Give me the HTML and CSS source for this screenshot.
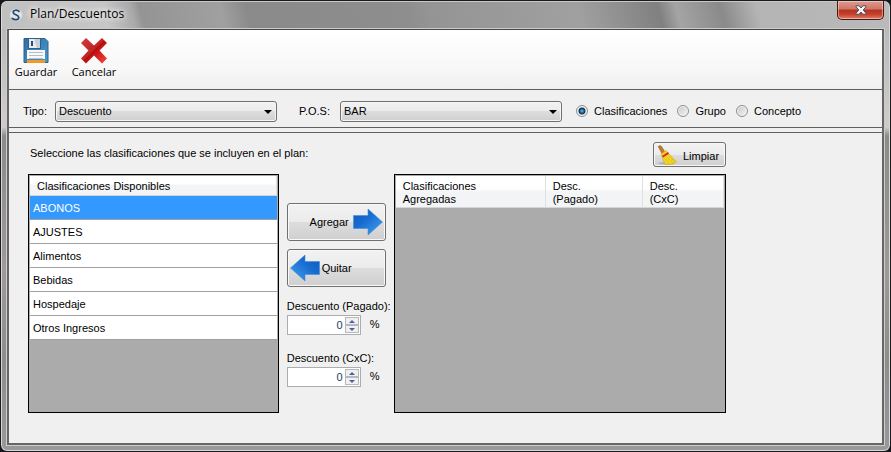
FILE: index.html
```html
<!DOCTYPE html>
<html lang="es">
<head>
    <meta charset="UTF-8">
    <meta name="viewport" content="width=device-width, initial-scale=1.0">
    <title>Plan/Descuentos</title>
    <link rel="stylesheet" href="styles.css">
</head>
<body>
    <div class="window">
        <header class="titlebar">
            <svg class="logo" viewBox="0 0 14 14" width="14" height="14" aria-hidden="true">
                <circle cx="7" cy="7" r="6.5" fill="#dfe4e8" stroke="#b9c0c6" stroke-width=".6"/>
                <path d="M10 3.400C8.200 1.400 4 1.900 4.200 4.500c.1 2.500 5.600 2.100 5.600 4.900 0 2.600-4.400 3.100-6.600 1" fill="none" stroke="#27486b" stroke-width="1.7" stroke-linecap="round"/>
            </svg>
            <h1 class="title">Plan/Descuentos</h1>
            <button class="close" type="button" aria-label="Cerrar">
                <svg viewBox="0 0 12 10" width="12" height="10">
                    <path d="M1 .8h3.200L6 3 7.800.8H11v1L8.200 5 11 8.200v1H7.800L6 7 4.200 9.200H1v-1L3.800 5 1 1.800z" fill="#f6f6f6" stroke="#4b4f62" stroke-width="1"/>
                </svg>
            </button>
        </header>
        <main class="client">
            <div class="toolbar">
                <button class="tool" type="button">
                    <svg viewBox="0 0 26 27" width="26" height="27">
                        <defs>
                            <linearGradient id="disk" x1="0" y1="0" x2="1" y2="1">
                                <stop offset="0" stop-color="#2f6da0"/>
                                <stop offset="1" stop-color="#4d9ad0"/>
                            </linearGradient>
                        </defs>
                        <path d="M1 1.500h21l3 3v21H1z" fill="url(#disk)" stroke="#2b6090"/>
                        <path d="M5 2h13v10H5z" fill="#2c618f"/>
                        <path d="M6 2h11v9H6z" fill="#e8eaec"/>
                        <path d="M8 4h2v5H8z" fill="#2a4f78"/>
                        <path d="M11 2h6v9h-3z" fill="#c9ced3"/>
                        <path d="M4 13h18v9H4z" fill="#f8f8f8"/>
                        <path d="M6 15.500h14M6 18.500h14M6 21.500h14" stroke="#b9bdc2"/>
                        <path d="M4 23h18v3H4z" fill="#f09a2c"/>
                    </svg>
                    <span>Guardar</span>
                </button>
                <button class="tool" type="button">
                    <svg viewBox="0 0 26 27" width="26" height="27">
                        <defs>
                            <linearGradient id="cross" x1="0" y1="0" x2="1" y2="1">
                                <stop offset="0" stop-color="#d23c3c"/>
                                <stop offset=".48" stop-color="#c02424"/>
                                <stop offset=".5" stop-color="#b90a0a"/>
                                <stop offset="1" stop-color="#ff4a44"/>
                            </linearGradient>
                        </defs>
                        <path d="M5 1l8 7.500L21 1l5 5-7.500 7.500L26 21.500l-5 5-8-8-8 8-5-5 7.500-8L0 6z" fill="url(#cross)"/>
                    </svg>
                    <span>Cancelar</span>
                </button>
            </div>
            <div class="filters">
                <label class="filter-label" for="tipo">Tipo:</label>
                <div class="combo">
                    <select id="tipo">
                        <option>Descuento</option>
                    </select>
                </div>
                <label class="filter-label pos" for="pos">P.O.S:</label>
                <div class="combo">
                    <select id="pos">
                        <option>BAR</option>
                    </select>
                </div>
                <div class="radios">
                    <label class="radio"><input type="radio" name="nivel" checked>Clasificaciones</label>
                    <label class="radio"><input type="radio" name="nivel">Grupo</label>
                    <label class="radio"><input type="radio" name="nivel">Concepto</label>
                </div>
            </div>
            <div class="content">
                <div class="heading">
                    <p>Seleccione las clasificaciones que se incluyen en el plan:</p>
                    <button class="btn clear" type="button">
                        <svg viewBox="0 0 20 20" width="20" height="20">
                            <path d="M1 18q8-3 17 0l-2 1.500H3z" fill="#b5b5b5"/>
                            <path d="M1.200 1.500Q3-.5 4.600 1.500L8 7 5 8.800z" fill="#bd7a2c" stroke="#96591c" stroke-width=".5"/>
                            <path d="M4 9l5-3.500 3.500 4 7 7.500-4 2-7.500.5L6 14z" fill="#f2d422" stroke="#d0a814" stroke-width=".6"/>
                            <path d="M8 13l4 6M10 12l6 6M12 11l6 6" stroke="#dcb41a" stroke-width=".6"/>
                            <path d="M5 11l6-4 1 1.800L6 12.500z" fill="#d42a20"/>
                        </svg>
                        <span>Limpiar</span>
                    </button>
                </div>
                <div class="columns">
                    <div class="grid-box">
                        <table class="grid available">
                            <thead>
                                <tr><th scope="col">Clasificaciones Disponibles</th></tr>
                            </thead>
                            <tbody>
                                <tr class="selected"><td>ABONOS</td></tr>
                                <tr><td>AJUSTES</td></tr>
                                <tr><td>Alimentos</td></tr>
                                <tr><td>Bebidas</td></tr>
                                <tr><td>Hospedaje</td></tr>
                                <tr><td>Otros Ingresos</td></tr>
                            </tbody>
                        </table>
                    </div>
                    <div class="actions">
                        <button class="btn move add" type="button">
                            <span>Agregar</span>
                            <svg viewBox="0 0 30 28" width="30" height="28">
                                <defs>
                                    <linearGradient id="arrow" x1="0" y1="0" x2="1" y2="1">
                                        <stop offset="0" stop-color="#1458b8"/>
                                        <stop offset=".4" stop-color="#176bd0"/>
                                        <stop offset="1" stop-color="#45a4ee"/>
                                    </linearGradient>
                                </defs>
                                <path d="M.5 7.500H15V1l14.500 13L15 27v-6.500H.5z" fill="url(#arrow)" stroke="#3f8edc" stroke-width=".6"/>
                            </svg>
                        </button>
                        <button class="btn move" type="button">
                            <svg viewBox="0 0 30 28" width="30" height="28">
                                <defs>
                                    <linearGradient id="arrow-back" x1="1" y1="0" x2="0" y2="1">
                                        <stop offset="0" stop-color="#1458b8"/>
                                        <stop offset=".4" stop-color="#176bd0"/>
                                        <stop offset="1" stop-color="#45a4ee"/>
                                    </linearGradient>
                                </defs>
                                <path d="M29.500 7.500H15V1L.5 14 15 27v-6.500h14.500z" fill="url(#arrow-back)" stroke="#3f8edc" stroke-width=".6"/>
                            </svg>
                            <span>Quitar</span>
                        </button>
                        <div class="field">
                            <label for="pagado">Descuento (Pagado):</label>
                            <div class="field-row">
                                <div class="spin">
                                    <input id="pagado" type="number" value="0" min="0" max="100">
                                    <div class="spin-buttons">
                                        <button type="button" aria-label="Aumentar"><svg viewBox="0 0 6 3" width="6" height="3"><path d="M0 3l3-3 3 3z"/></svg></button>
                                        <button type="button" aria-label="Disminuir"><svg viewBox="0 0 6 3" width="6" height="3"><path d="M0 0h6L3 3z"/></svg></button>
                                    </div>
                                </div>
                                <span>%</span>
                            </div>
                        </div>
                        <div class="field">
                            <label for="cxc">Descuento (CxC):</label>
                            <div class="field-row">
                                <div class="spin">
                                    <input id="cxc" type="number" value="0" min="0" max="100">
                                    <div class="spin-buttons">
                                        <button type="button" aria-label="Aumentar"><svg viewBox="0 0 6 3" width="6" height="3"><path d="M0 3l3-3 3 3z"/></svg></button>
                                        <button type="button" aria-label="Disminuir"><svg viewBox="0 0 6 3" width="6" height="3"><path d="M0 0h6L3 3z"/></svg></button>
                                    </div>
                                </div>
                                <span>%</span>
                            </div>
                        </div>
                    </div>
                    <div class="grid-box">
                        <table class="grid added">
                            <thead>
                                <tr>
                                    <th class="col-name" scope="col">Clasificaciones<br>Agregadas</th>
                                    <th class="col-paid" scope="col">Desc.<br>(Pagado)</th>
                                    <th scope="col">Desc.<br>(CxC)</th>
                                </tr>
                            </thead>
                        </table>
                    </div>
                </div>
            </div>
        </main>
    </div>
</body>
</html>
```
FILE: styles.css
```css
*{
    box-sizing: border-box;
}
body{
    margin: 0;
    background-color: #15151b;
    font-family: "Liberation Sans", Arial, sans-serif;
    font-size: 11px;
    line-height: 13px;
    color: #000;
}
button, input, select{
    font: inherit;
    color: inherit;
    margin: 0;
    padding: 0;
}
h1, p{
    margin: 0;
}
svg{
    display: block;
    flex: none;
}

/* window frame */
.window{
    display: flex;
    flex-direction: column;
    min-height: 100vh;
    padding: 0 6px 6px 6px;
    border: 1px solid #1b1b1f;
    border-radius: 7px;
    background: linear-gradient(#b5b5b5, #cfcbca 28%, #8d8b8a 30%, #9d9a99 60%, #8f8d8c 80%, #999);
    box-shadow: inset 0 0 0 1px #d8d8d8;
}
.titlebar{
    display: flex;
    height: 28px;
    margin: 0 -5px;
    padding: 0 5px 0 7px;
    border-top: 1px solid #c8c8c8;
    border-radius: 6px 6px 0 0;
    background: linear-gradient(75deg, #c0c0c0 0, #c6c6c6 12%, #aaa 15%, #949494 16%, #a0a0a0 25%, #8a8a8a 28%, #8e8e8e 46%, #949494 48%, #a0a0a0 65%, #808080 74%, #a4a4a4 76%, #8a8a8a 81%, #b4b4b4 85%, #bababa);
}
.logo{
    margin-top: 6px;
}
.title{
    margin: 4px 0 0 7px;
    font-family: "Open Sans", "Noto Sans", sans-serif;
    font-size: 12px;
    font-weight: normal;
    line-height: 16px;
    text-shadow: 0 0 6px #fff, 0 0 6px #fff;
}
.close{
    display: flex;
    justify-content: center;
    align-items: center;
    width: 47px;
    height: 19px;
    margin: -1px 0 0 auto;
    border: 1px solid #4a1712;
    border-top: 0;
    border-radius: 0 0 5px 5px;
    background: linear-gradient(#dd9b90, #d07565 45%, #b13322 50%, #c8412a 75%, #e08068);
    box-shadow: inset 0 0 0 1px rgba(255,255,255,.4);
}
.client{
    display: flex;
    flex-direction: column;
    flex: 1;
    border: 2px solid #666;
    border-top: 1px solid #484848;
    background-color: #f0f0f0;
    box-shadow: 0 0 0 1px #ccc;
}

/* toolbar */
.toolbar{
    display: flex;
    gap: 4px;
    height: 59px;
    padding-top: 7px;
    background: linear-gradient(#fff, #f7f7f7 70%, #efefef);
}
.tool{
    display: flex;
    flex-direction: column;
    align-items: center;
    width: 54px;
    border: 0;
    background: none;
    font-family: "Open Sans", "Noto Sans", sans-serif;
    line-height: 15px;
}

/* filters */
.filters{
    display: flex;
    align-items: center;
    height: 39px;
    padding: 5px 0 0 14px;
    border-top: 1px solid #606060;
    border-bottom: 1px solid #606060;
}
.filter-label{
    width: 32px;
}
.filter-label.pos{
    width: 41px;
    margin-left: 22px;
}
.combo{
    position: relative;
    flex: 0 1 222px;
}
.combo::after{
    content: "";
    position: absolute;
    right: 5px;
    top: 9px;
    border: 4px solid transparent;
    border-top-color: #000;
    border-bottom: 0;
    pointer-events: none;
}
.combo select{
    display: block;
    width: 100%;
    height: 21px;
    padding-left: 3px;
    appearance: none;
    border: 1px solid #707070;
    border-radius: 3px;
    background: linear-gradient(#f2f2f2, #ebebeb 50%, #dddddd 50%, #cfcfcf);
    box-shadow: inset 0 0 0 1px #f6f6f6;
}
.radios{
    display: flex;
    gap: 10px;
    margin-left: 14px;
}
.radio{
    display: flex;
    align-items: center;
    gap: 6px;
}
.radio input{
    width: 12px;
    height: 12px;
    appearance: none;
    border: 1px solid #8e8f8f;
    border-radius: 50%;
    background: linear-gradient(135deg, #c4c8cc, #f5f5f5);
    box-shadow: inset 0 0 0 1px #f4f4f4;
}
.radio input:checked{
    background: radial-gradient(circle at 5px 5px, #6fc4ea 0, #17608f 2px, #0d2f4c 3px, #dfe3e6 4px);
}

/* content */
.content{
    flex: 1;
    margin-top: 4px;
    padding: 9px 156px 29px 19px;
    border-top: 1px solid #606060;
}
.heading{
    display: flex;
    justify-content: space-between;
    align-items: center;
    padding-left: 2px;
    margin-bottom: 7px;
}
.heading p{
    margin-bottom: 3px;
}
.btn{
    display: flex;
    align-items: center;
    border: 1px solid #707070;
    border-radius: 3px;
    background: linear-gradient(#f2f2f2, #ebebeb 50%, #dddddd 50%, #cfcfcf);
    box-shadow: inset 0 0 0 1px #f8f8f8;
}
.clear{
    gap: 6px;
    width: 73px;
    height: 25px;
    padding-left: 3px;
}
.clear span{
    padding-top: 3px;
}
.columns{
    display: grid;
    grid-template-columns: 43fr 99px 57fr;
    column-gap: 8px;
    min-height: 239px;
}
.grid-box{
    padding: 1px;
    border: 1px solid #000;
    background-color: #ababab;
}
.grid{
    width: 100%;
    border-collapse: separate;
    border-spacing: 0;
    table-layout: fixed;
}
.grid th{
    border-right: 1px solid #dedfe1;
    border-bottom: 1px solid #d5d5d5;
    background: linear-gradient(#fff 40%, #f4f5f7 50%, #f3f4f6);
    font-weight: normal;
    text-align: left;
}
.available th{
    height: 20px;
    padding: 1px 7px 0 7px;
}
.added th{
    height: 32px;
    padding: 3px 7px 0 7px;
}
.col-name{
    width: 150px;
}
.col-paid{
    width: 97px;
}
.grid td{
    height: 24px;
    padding: 1px 3px 0 3px;
    border-bottom: 1px solid #a0a0a0;
    background-color: #fff;
}
.grid .selected td{
    background-color: #3399ff;
    color: #fff;
}

/* middle column */
.actions{
    display: flex;
    flex-direction: column;
    padding-top: 29px;
}
.move{
    height: 38px;
    margin-bottom: 8px;
    padding: 0 2px;
    gap: 2px;
}
.add{
    justify-content: flex-end;
    gap: 4px;
}
.field{
    display: flex;
    flex-direction: column;
    gap: 2px;
    margin: 5px 0 12px 0;
    white-space: nowrap;
}
.field-row{
    display: flex;
    gap: 9px;
    line-height: 18px;
}
.spin{
    display: flex;
    width: 74px;
    height: 20px;
    padding: 1px;
    border: 1px solid #abadb3;
    background-color: #fff;
}
.spin input{
    flex: 1;
    width: 0;
    padding-right: 2px;
    border: 0;
    outline: 0;
    background: none;
    text-align: right;
    color: #1b3a66;
    appearance: textfield;
}
.spin input::-webkit-inner-spin-button{
    appearance: none;
    margin: 0;
}
.spin-buttons{
    display: grid;
    grid-template-rows: 1fr 1fr;
    width: 14px;
}
.spin-buttons button{
    display: flex;
    justify-content: center;
    align-items: center;
    border: 1px solid #b8b8b8;
    background-color: #f0f0f0;
}
.spin-buttons path{
    fill: #4a5fa5;
}
```
